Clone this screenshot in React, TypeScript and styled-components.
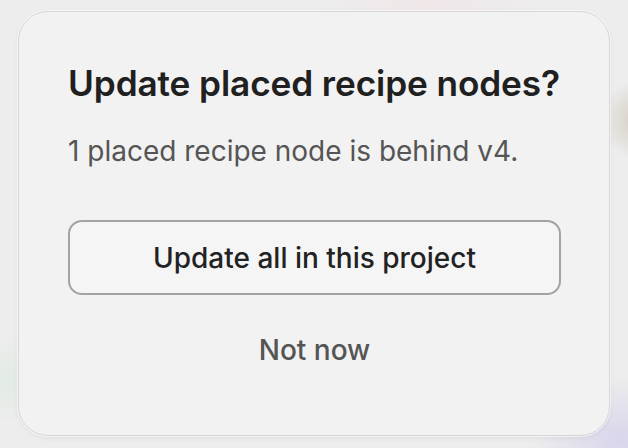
import styled, { createGlobalStyle } from "styled-components";

const GlobalStyle = createGlobalStyle`
  html, body {
    margin: 0;
    padding: 0;
  }
  body {
    font-family: "Inter", "Noto Sans", sans-serif;
    -webkit-font-smoothing: antialiased;
  }
`;

const Backdrop = styled.div`
  width: 628px;
  height: 448px;
  box-sizing: border-box;
  padding: 11px 18px 12px 18px;
  overflow: hidden;
  background:
    radial-gradient(circle at 640px 120px, rgba(190, 175, 155, 0.55), transparent 40px),
    radial-gradient(ellipse at 620px 440px, rgba(215, 210, 235, 0.9), transparent 90px),
    radial-gradient(ellipse at 0px 380px, rgba(225, 235, 228, 0.9), transparent 80px),
    radial-gradient(ellipse at 430px 0px, rgba(240, 230, 232, 0.9), transparent 120px),
    #ededed;
`;

const Card = styled.section`
  box-sizing: border-box;
  width: 592px;
  height: 425px;
  border-radius: 30px;
  background: #f2f2f2;
  border: 1.5px solid #d6d6d6;
  box-shadow:
    0 0 0 1px rgba(255, 255, 255, 0.6),
    0 2px 6px rgba(0, 0, 0, 0.06);
  padding: 50px 48px 0 49px;
  display: flex;
  flex-direction: column;
`;

const Title = styled.h2`
  margin: 0;
  font-size: 35.2px;
  line-height: 42px;
  font-weight: 600;
  color: #202020;
  letter-spacing: -0.1px;
  white-space: nowrap;
`;

const Message = styled.p`
  margin: 30px 0 0 0;
  font-size: 28px;
  line-height: 35px;
  font-weight: 400;
  color: #555555;
`;

const PrimaryButton = styled.button`
  margin-top: 51px;
  height: 75px;
  width: 100%;
  box-sizing: border-box;
  border: 2px solid #a3a3a3;
  border-radius: 14px;
  background: #f5f5f5;
  font-family: inherit;
  font-size: 28px;
  font-weight: 500;
  color: #222222;
  cursor: pointer;
`;

const GhostButton = styled.button`
  margin-top: 38px;
  align-self: center;
  border: none;
  background: transparent;
  padding: 0;
  font-family: inherit;
  font-size: 28px;
  line-height: 35px;
  font-weight: 500;
  color: #555555;
  cursor: pointer;
`;

export default function App() {
  return (
    <>
      <GlobalStyle />
      <Backdrop>
        <Card>
          <Title>Update placed recipe nodes?</Title>
          <Message>1 placed recipe node is behind v4.</Message>
          <PrimaryButton>Update all in this project</PrimaryButton>
          <GhostButton>Not now</GhostButton>
        </Card>
      </Backdrop>
    </>
  );
}
